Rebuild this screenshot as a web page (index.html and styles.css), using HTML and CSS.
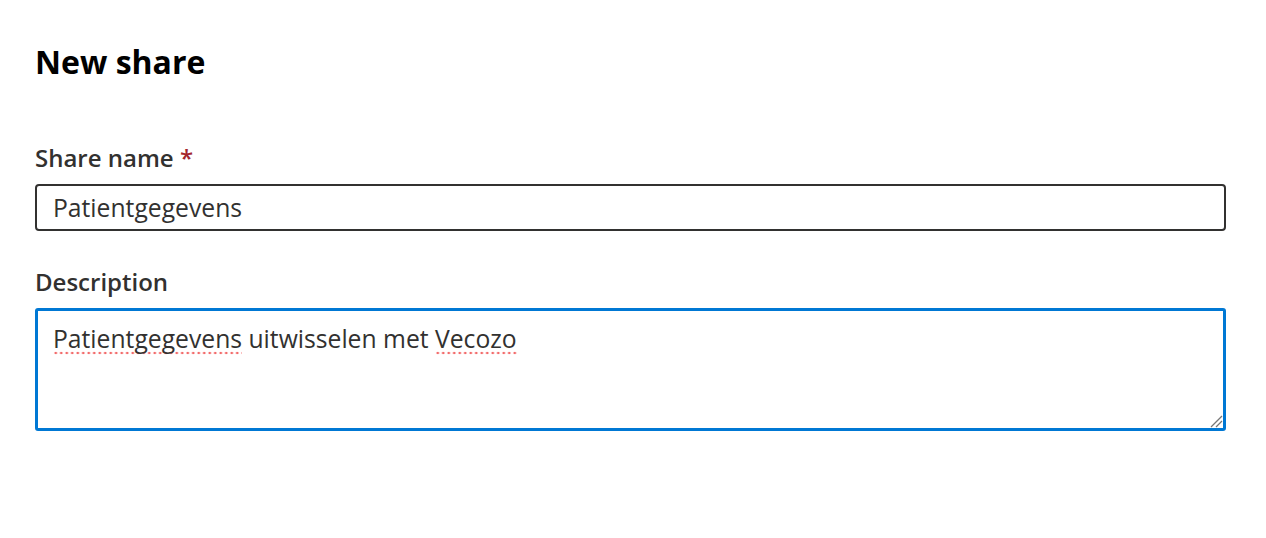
FILE: index.html
```html
<!DOCTYPE html>
<html lang="en">
<head>
<meta charset="utf-8">
<title>New share</title>
<link rel="stylesheet" href="styles.css">
</head>
<body>
<main class="panel">
  <h1 class="title">New share</h1>
  <div class="field">
    <label class="label">Share name <span class="req">*</span></label>
    <div class="input">Patientgegevens</div>
  </div>
  <div class="field">
    <label class="label">Description</label>
    <div class="textarea">
      <span class="typo">Patientgegevens</span> uitwisselen met <span class="typo">Vecozo</span>
      <svg class="grip" width="14" height="14" viewBox="0 0 14 14"><path d="M2 13 L13 2 M7 13 L13 7" stroke="#777" stroke-width="1.3" fill="none"/></svg>
    </div>
  </div>
</main>
</body>
</html>
```
FILE: styles.css
```css
html, body {
  margin: 0;
  background: #fff;
}
body {
  font-family: "Open Sans", "Noto Sans", sans-serif;
  color: #323130;
}
.panel {
  padding: 36px 40px 0 35px;
  display: flex;
  flex-direction: column;
}
.title {
  margin: 0 0 54px 0;
  font-size: 32px;
  line-height: 52px;
  font-weight: 700;
  color: #000;
}
.field {
  display: flex;
  flex-direction: column;
  margin-bottom: 35px;
}
.label {
  font-size: 24px;
  font-weight: 600;
  line-height: 32px;
  margin-bottom: 10px;
  color: #323130;
}
.req {
  color: #a4262c;
}
.input {
  height: 43px;
  border: 2px solid #323130;
  border-radius: 4px;
  padding: 0 16px;
  font-size: 24.7px;
  line-height: 43px;
}
.textarea {
  position: relative;
  border: 3px solid #0078d4;
  border-radius: 3px;
  padding: 12px 15px;
  font-size: 24.7px;
  line-height: 32px;
  box-sizing: border-box;
  height: 123px;
}
.typo {
  background-image: radial-gradient(circle, #f26b6b 1.2px, transparent 1.6px);
  background-size: 5.5px 4px;
  background-repeat: repeat-x;
  background-position: 0 100%;
}
.grip {
  position: absolute;
  right: 0;
  bottom: 0;
}
```
